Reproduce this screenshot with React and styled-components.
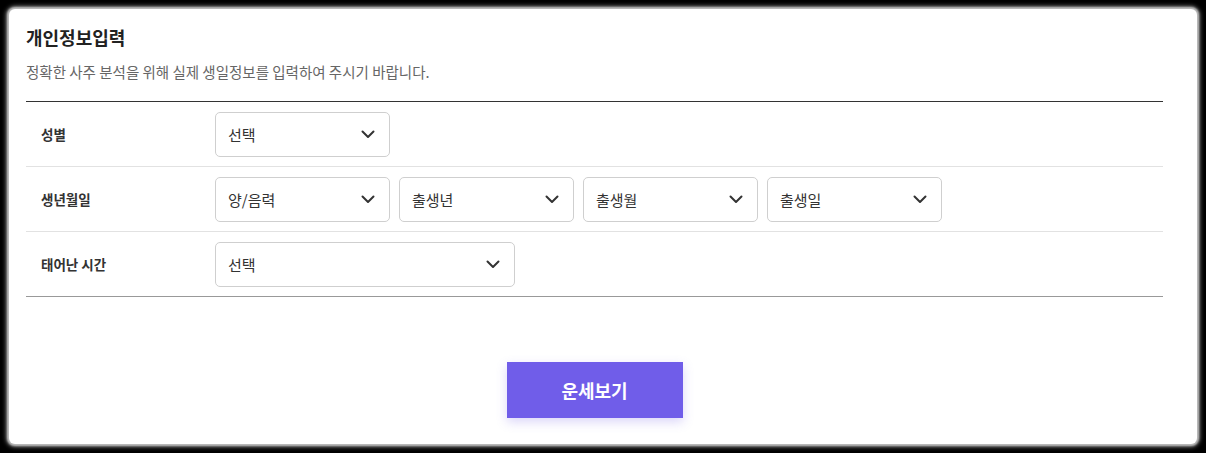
import styled, { createGlobalStyle } from "styled-components";

const GlobalStyle = createGlobalStyle`
  html, body {
    margin: 0;
    padding: 0;
    background: #000;
  }
  body {
    font-family: "Noto Sans CJK KR", "Noto Sans", sans-serif;
  }
`;

const Frame = styled.div`
  height: 453px;
  box-sizing: border-box;
  padding: 9px;
`;

const Card = styled.div`
  height: 100%;
  box-sizing: border-box;
  background: #fff;
  border-radius: 6px;
  box-shadow: 0 0 2px 2px #bdbdbd, 0 0 4px 3px #777;
  padding: 16px 34px 0 17px;
  display: flex;
  flex-direction: column;
`;

const Title = styled.h2`
  margin: 0;
  font-size: 18px;
  line-height: 24px;
  font-weight: 700;
  color: #222;
`;

const Desc = styled.p`
  margin: 13px 0 19px;
  font-size: 14.5px;
  line-height: 20px;
  color: #666;
`;

const Table = styled.div`
  border-top: 1px solid #333;
  border-bottom: 1px solid #999;
`;

const Row = styled.div`
  display: grid;
  grid-template-columns: 189px 1fr;
  align-items: center;
  height: 64px;
  border-top: ${(p) => (p.$first ? "none" : "1px solid #e2e2e2")};
`;

const Label = styled.div`
  padding-left: 15px;
  font-size: 13.5px;
  font-weight: 700;
  color: #333;
`;

const Fields = styled.div`
  display: flex;
  gap: 9px;
`;

const SelectBox = styled.div`
  width: ${(p) => p.$w || 175}px;
  height: 45px;
  box-sizing: border-box;
  border: 1px solid #cfcfcf;
  border-radius: 5px;
  display: flex;
  align-items: center;
  justify-content: space-between;
  padding: 0 14px 0 12px;
  font-size: 15px;
  color: #333;
`;

const Chevron = () => (
  <svg width="14" height="14" viewBox="0 0 14 14" fill="none">
    <path d="M1.5 4.5 L7 10 L12.5 4.5" stroke="#333" strokeWidth="2" strokeLinecap="round" strokeLinejoin="round" />
  </svg>
);

const Select = ({ text, w }) => (
  <SelectBox $w={w}>
    <span>{text}</span>
    <Chevron />
  </SelectBox>
);

const ButtonWrap = styled.div`
  display: flex;
  justify-content: center;
  margin-top: 65px;
`;

const Button = styled.button`
  width: 176px;
  height: 56px;
  border: none;
  background: #705de9;
  color: #fff;
  font-family: inherit;
  font-size: 18px;
  font-weight: 700;
  box-shadow: 0 4px 10px rgba(112, 93, 233, 0.25);
  cursor: pointer;
`;

export default function App() {
  return (
    <>
      <GlobalStyle />
      <Frame>
        <Card>
          <Title>개인정보입력</Title>
          <Desc>정확한 사주 분석을 위해 실제 생일정보를 입력하여 주시기 바랍니다.</Desc>
          <Table>
            <Row $first>
              <Label>성별</Label>
              <Fields>
                <Select text="선택" />
              </Fields>
            </Row>
            <Row>
              <Label>생년월일</Label>
              <Fields>
                <Select text="양/음력" />
                <Select text="출생년" />
                <Select text="출생월" />
                <Select text="출생일" />
              </Fields>
            </Row>
            <Row>
              <Label>태어난 시간</Label>
              <Fields>
                <Select text="선택" w={300} />
              </Fields>
            </Row>
          </Table>
          <ButtonWrap>
            <Button>운세보기</Button>
          </ButtonWrap>
        </Card>
      </Frame>
    </>
  );
}
